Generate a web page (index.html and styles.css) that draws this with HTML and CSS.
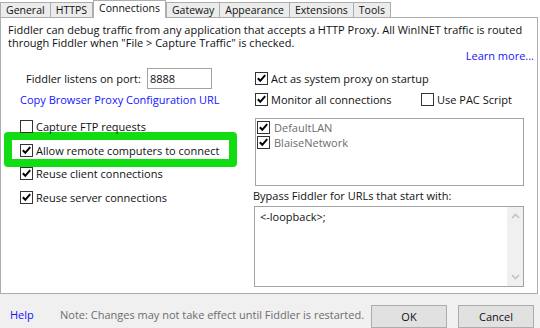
FILE: index.html
```html
<!DOCTYPE html>
<html lang="en">
<head>
    <meta charset="UTF-8">
    <meta name="viewport" content="width=device-width, initial-scale=1.0">
    <title>Fiddler Options - Connections</title>
    <link rel="stylesheet" href="styles.css">
</head>
<body>
    <nav class="tabs">
        <div class="tab">General</div>
        <div class="tab">HTTPS</div>
        <div class="tab active">Connections</div>
        <div class="tab">Gateway</div>
        <div class="tab">Appearance</div>
        <div class="tab">Extensions</div>
        <div class="tab">Tools</div>
    </nav>

    <main class="panel">
        <p class="intro">Fiddler can debug traffic from any application that accepts a HTTP Proxy. All WinINET traffic is routed</p>
        <p class="intro">through Fiddler when "File &gt; Capture Traffic" is checked.</p>
        <div class="learn"><a href="#" class="link">Learn more...</a></div>

        <div class="columns">
            <section class="col-left">
                <div class="port-row">
                    <label for="port">Fiddler listens on port:</label>
                    <input type="text" id="port" class="port" value="8888">
                </div>
                <a href="#" class="link copy-url">Copy Browser Proxy Configuration URL</a>

                <div class="check first">
                    <span class="box"></span>
                    <span>Capture FTP requests</span>
                </div>
                <div class="highlight">
                    <div class="check">
                        <span class="box"><svg viewBox="0 0 11 11"><polyline points="1.8,5.2 4.3,7.8 9.2,2.2"/></svg></span>
                        <span>Allow remote computers to connect</span>
                    </div>
                </div>
                <div class="check after-hl">
                    <span class="box"><svg viewBox="0 0 11 11"><polyline points="1.8,5.2 4.3,7.8 9.2,2.2"/></svg></span>
                    <span>Reuse client connections</span>
                </div>
                <div class="check last">
                    <span class="box"><svg viewBox="0 0 11 11"><polyline points="1.8,5.2 4.3,7.8 9.2,2.2"/></svg></span>
                    <span>Reuse server connections</span>
                </div>
            </section>

            <section class="col-right">
                <div class="check act">
                    <span class="box"><svg viewBox="0 0 11 11"><polyline points="1.8,5.2 4.3,7.8 9.2,2.2"/></svg></span>
                    <span>Act as system proxy on startup</span>
                </div>
                <div class="monitor-row">
                    <div class="check monitor">
                        <span class="box"><svg viewBox="0 0 11 11"><polyline points="1.8,5.2 4.3,7.8 9.2,2.2"/></svg></span>
                        <span>Monitor all connections</span>
                    </div>
                    <div class="check">
                        <span class="box"></span>
                        <span>Use PAC Script</span>
                    </div>
                </div>

                <div class="listbox">
                    <div class="check item">
                        <span class="box"><svg viewBox="0 0 11 11"><polyline points="1.8,5.2 4.3,7.8 9.2,2.2"/></svg></span>
                        <span>DefaultLAN</span>
                    </div>
                    <div class="check item">
                        <span class="box"><svg viewBox="0 0 11 11"><polyline points="1.8,5.2 4.3,7.8 9.2,2.2"/></svg></span>
                        <span>BlaiseNetwork</span>
                    </div>
                </div>

                <p class="bypass-label">Bypass Fiddler for URLs that start with:</p>
                <div class="bypass">
                    <div class="bypass-text">&lt;-loopback&gt;;</div>
                    <div class="scrollbar">
                        <svg viewBox="0 0 9 6"><polyline points="1,5 4.5,1.5 8,5"/></svg>
                        <svg viewBox="0 0 9 6"><polyline points="1,1 4.5,4.5 8,1"/></svg>
                    </div>
                </div>
            </section>
        </div>
    </main>

    <footer class="footer">
        <a href="#" class="link help">Help</a>
        <span class="note">Note: Changes may not take effect until Fiddler is restarted.</span>
        <button class="btn ok">OK</button>
        <button class="btn">Cancel</button>
    </footer>
</body>
</html>
```

FILE: styles.css
```css
/* Colores de la ventana */
:root {
    --border: #adadad;
    --field-border: #a3a3a3;
    --link: #1414ff;
    --muted: #6d6d6d;
    --face: #f0f0f0;
    --mark: #12dd12;
}

* {
    margin: 0;
    padding: 0;
    box-sizing: border-box;
}

body {
    width: 540px;
    height: 328px;
    overflow: hidden;
    display: flex;
    flex-direction: column;
    background: #fff;
    color: #111;
    font-family: "Open Sans", "Liberation Sans", sans-serif;
    font-size: 11px;
    line-height: 13px;
}

.link {
    color: var(--link);
    text-decoration: none;
}

/* Pestañas */
.tabs {
    display: flex;
    align-items: flex-end;
    height: 17px;
}

.tab {
    height: 15px;
    padding: 0 5px;
    border: 1px solid var(--border);
    border-bottom: none;
    margin-right: -1px;
    background: #ececec;
    font-size: 10.5px;
    line-height: 14px;
    text-align: center;
}

.tab.active {
    position: relative;
    z-index: 1;
    height: 18px;
    margin: 0 0 -1px 1px;
    padding: 0 5px;
    background: #fff;
    line-height: 14px;
}

/* Panel principal */
.panel {
    width: 538px;
    height: 279px;
    border: 1px solid var(--border);
    padding: 5px 0 0 7px;
}

.intro {
    height: 13px;
    line-height: 13px;
}

.learn {
    text-align: right;
    padding-right: 3px;
}

.columns {
    display: grid;
    grid-template-columns: 245px 272px;
}

.port-row {
    display: flex;
    align-items: center;
    height: 21px;
    margin: 6px 0 0 18px;
}

.port-row label {
    width: 121px;
}

.port {
    width: 65px;
    height: 21px;
    border: 1px solid var(--field-border);
    padding: 0 2px;
    font: inherit;
    color: #111;
    outline: none;
}

.copy-url {
    display: block;
    margin: 4px 0 0 12px;
    line-height: 14px;
}

/* Casillas */
.check {
    display: flex;
    align-items: center;
    gap: 3px;
    height: 14px;
    white-space: nowrap;
}

.box {
    width: 13px;
    height: 13px;
    flex: none;
    border: 1px solid #333;
    background: #fff;
}

.box svg {
    display: block;
    width: 11px;
    height: 11px;
}

.box polyline {
    fill: none;
    stroke: #000;
    stroke-width: 2;
}

.col-left .check {
    margin-left: 12px;
}

.col-left .first {
    margin-top: 12px;
}

.highlight {
    width: 233px;
    margin: -1px 0 0 -4px;
    padding: 3px 0 2px 8px;
    border: 8px solid var(--mark);
    border-radius: 4px;
}

.col-left .highlight .check {
    margin-left: 0;
}

.col-left .after-hl {
    margin-top: -1px;
}

.col-left .last {
    margin-top: 10px;
}

.col-right .check {
    margin-left: 2px;
}

.col-right .act {
    margin-top: 9px;
}

.monitor-row {
    display: flex;
    margin-top: 7px;
}

.col-right .monitor {
    width: 164px;
}

.listbox {
    width: 269px;
    height: 68px;
    margin: 12px 0 0 2px;
    border: 1px solid var(--field-border);
    padding: 1px 0 0 1px;
    color: var(--muted);
}

.listbox .check.item {
    height: 15px;
    margin-left: 0;
    gap: 4px;
}

.bypass-label {
    margin-top: 3px;
    line-height: 14px;
}

.bypass {
    display: flex;
    width: 270px;
    height: 81px;
    margin: 3px 0 0 1px;
    border: 1px solid var(--field-border);
}

.bypass-text {
    flex: 1;
    padding: 3px 5px;
    line-height: 14px;
}

.scrollbar {
    width: 16px;
    display: flex;
    flex-direction: column;
    justify-content: space-between;
    align-items: center;
    padding: 6px 0;
    background: var(--face);
}

.scrollbar svg {
    width: 9px;
    height: 6px;
}

.scrollbar polyline {
    fill: none;
    stroke: #c2c2c2;
    stroke-width: 1.6;
}

/* Pie de página */
.footer {
    flex: 1;
    display: flex;
    align-items: flex-start;
    padding: 11px 6px 0 10px;
    background: var(--face);
}

.help,
.note {
    margin-top: 3px;
    line-height: 14px;
}

.help {
    width: 50px;
}

.note {
    color: var(--muted);
}

.btn {
    width: 76px;
    height: 23px;
    border: 1px solid var(--border);
    background: #e1e1e1;
    font: inherit;
    color: #111;
}

.btn.ok {
    margin: 0 11px 0 auto;
}
```
